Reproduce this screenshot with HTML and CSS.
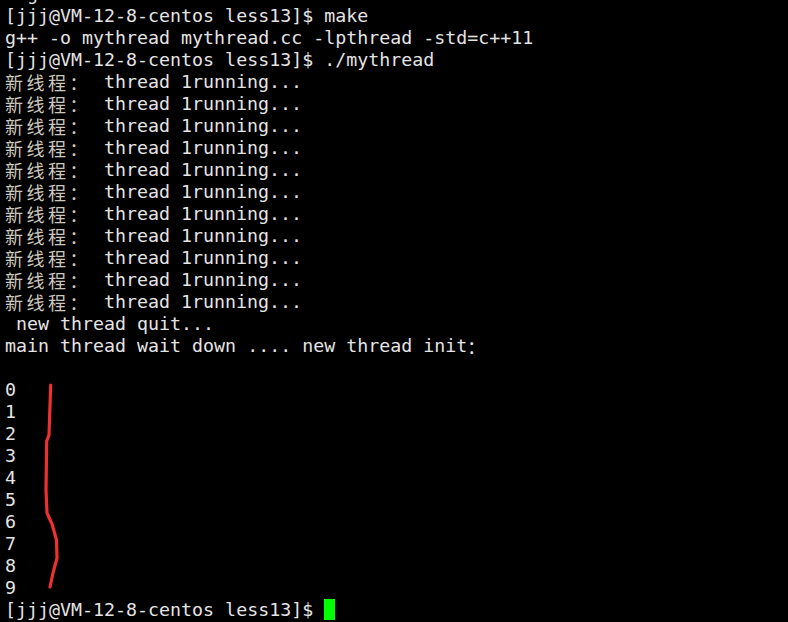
FILE: index.html
```html
<!DOCTYPE html>
<html>
<head>
<meta charset="utf-8">
<link rel="stylesheet" href="styles.css">
</head>
<body>
<div class="term">
<div class="line prev">  g</div>
<div class="line">[jjj@VM-12-8-centos less13]$ make</div>
<div class="line">g++ -o mythread mythread.cc -lpthread -std=c++11</div>
<div class="line">[jjj@VM-12-8-centos less13]$ ./mythread</div>
<div class="line"><span class="cjk">新线程：</span> thread 1running...</div>
<div class="line"><span class="cjk">新线程：</span> thread 1running...</div>
<div class="line"><span class="cjk">新线程：</span> thread 1running...</div>
<div class="line"><span class="cjk">新线程：</span> thread 1running...</div>
<div class="line"><span class="cjk">新线程：</span> thread 1running...</div>
<div class="line"><span class="cjk">新线程：</span> thread 1running...</div>
<div class="line"><span class="cjk">新线程：</span> thread 1running...</div>
<div class="line"><span class="cjk">新线程：</span> thread 1running...</div>
<div class="line"><span class="cjk">新线程：</span> thread 1running...</div>
<div class="line"><span class="cjk">新线程：</span> thread 1running...</div>
<div class="line"><span class="cjk">新线程：</span> thread 1running...</div>
<div class="line"> new thread quit...</div>
<div class="line">main thread wait down .... new thread init<span class="colon">：</span></div>
<div class="line"> </div>
<div class="line">0</div>
<div class="line">1</div>
<div class="line">2</div>
<div class="line">3</div>
<div class="line">4</div>
<div class="line">5</div>
<div class="line">6</div>
<div class="line">7</div>
<div class="line">8</div>
<div class="line">9</div>
<div class="line">[jjj@VM-12-8-centos less13]$ <span class="cursor"></span></div>
</div>
<svg class="mark" width="788" height="622" viewBox="0 0 788 622">
<path d="M50.7 385 L49 435 L46.7 441 L46 490 L47 513 L52 524 L56.5 540 L57 558 L53 573 L50 587" fill="none" stroke="#ef3030" stroke-width="3.2" stroke-linecap="round" stroke-linejoin="round"/>
</svg>
</body>
</html>
```
FILE: styles.css
```css
html, body {
  margin: 0;
  padding: 0;
  background: #000;
  width: 788px;
  height: 622px;
  overflow: hidden;
}
body {
  position: relative;
}
.term {
  padding: 5px 0 0 5px;
  font-family: "DejaVu Sans Mono", monospace;
  font-size: 18.3px;
  line-height: 22px;
  color: #e4e4e4;
}
.line {
  height: 22px;
  white-space: pre;
}
.prev {
  margin-top: -22px;
}
.cjk {
  font-family: "Noto Sans CJK SC", sans-serif;
  color: #cdc8bd;
  display: inline-block;
  width: 88px;
  letter-spacing: 3.5px;
  font-size: 18px;
  line-height: 22px;
  height: 22px;
  vertical-align: top;
}
.colon {
  font-family: "Noto Sans CJK SC", sans-serif;
  font-size: 18px;
  display: inline-block;
  width: 22px;
  height: 22px;
  line-height: 22px;
  vertical-align: top;
}
.cursor {
  display: inline-block;
  width: 11px;
  height: 21px;
  background: #00ff00;
  vertical-align: top;
}
.mark {
  position: absolute;
  left: 0;
  top: 0;
}
```
